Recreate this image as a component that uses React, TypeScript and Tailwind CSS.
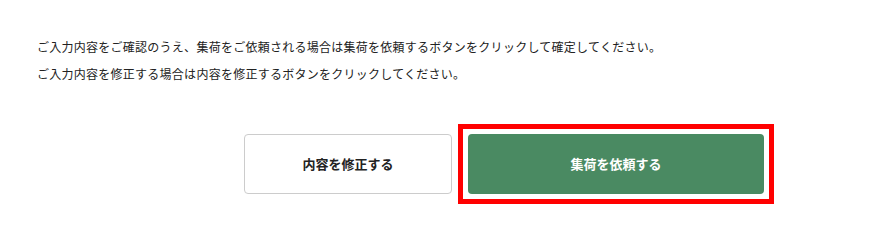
export default function App() {
  return (
    <div
      className="w-[885px] h-[245px] bg-white text-[#222222]"
      style={{ fontFamily: '"Noto Sans CJK JP", "Noto Sans", sans-serif' }}
    >
      <div className="pt-[33px] pl-[37px] text-[12px] leading-[27px] tracking-[0.26px]">
        <p>ご入力内容をご確認のうえ、集荷をご依頼される場合は集荷を依頼するボタンをクリックして確定してください。</p>
        <p>ご入力内容を修正する場合は内容を修正するボタンをクリックしてください。</p>
      </div>
      <div className="mt-[37px] pl-[244px] flex items-center">
        <button className="w-[208px] h-[60px] border border-[#cccccc] rounded-[4px] bg-white text-[13px] font-bold text-[#222222]">
          内容を修正する
        </button>
        <div className="ml-[6px] border-[5px] border-[#ff0000] p-[5px]">
          <button className="w-[296px] h-[60px] rounded-[4px] bg-[#4a8a62] text-[13px] font-bold text-white">
            集荷を依頼する
          </button>
        </div>
      </div>
    </div>
  );
}
